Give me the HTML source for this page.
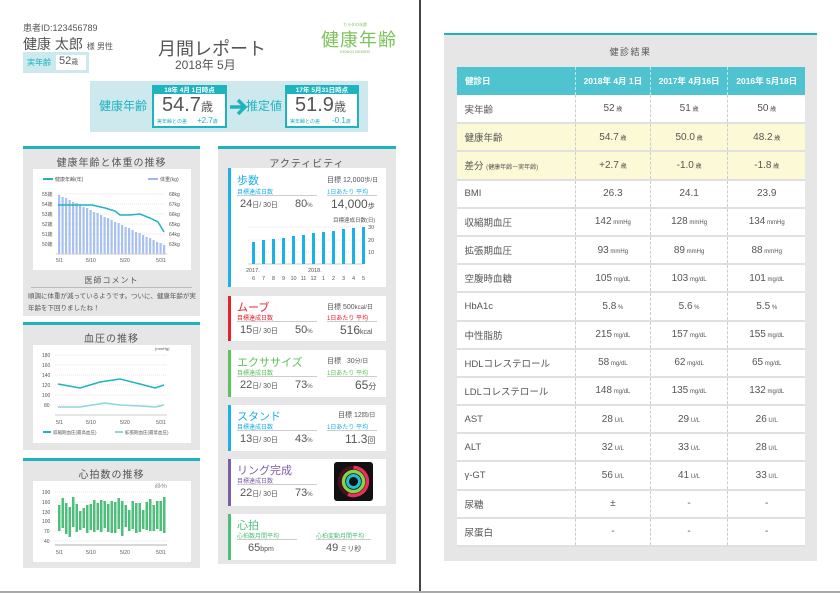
<!DOCTYPE html>
<html><head><meta charset="utf-8"><style>
*{margin:0;padding:0;box-sizing:border-box}
body{width:840px;height:593px;background:#fff;position:relative;overflow:hidden;font-family:"Liberation Sans","Noto Sans CJK JP",sans-serif;color:#555}
.a{position:absolute;white-space:nowrap}
.panel{position:absolute;background:#e6e6e6;border-top:3px solid #1fb3c0;z-index:-2}
.ttl{position:absolute;left:0;right:0;text-align:center;font-size:10px;color:#555;letter-spacing:1px}
.card{position:absolute;background:#fff;border-left:3px solid}
.sm{font-size:6px}
table{position:absolute;left:456px;top:67px;width:349px;border-collapse:collapse;font-size:10px;color:#555}
td{height:28.2px;border-bottom:2px solid #e0e0e0;border-left:1px dashed #ccc;text-align:center;background:#fff}
td:first-child{text-align:left;padding-left:8px;border-left:none;width:119px;font-size:9.5px}
tr.h td{background:#4fc3cf;color:#fff;font-weight:bold;height:28px;border-bottom:none;border-left:1px dashed #bfe9ee;font-size:8.5px}
tr.y td{background:#fcf9d6}
td small{font-size:6px}
</style></head><body>
<div class="a" style="left:419px;top:0;width:2px;height:593px;background:#444"></div>
<div class="a" style="left:0;top:591px;width:840px;height:2px;background:#aaa"></div>

<div class="a" style="left:23px;top:21px;font-size:9px;color:#555">患者ID:123456789</div>
<div class="a" style="left:23px;top:34px;font-size:14px;color:#555">健康 太郎 <span style="font-size:8px">様 男性</span></div>
<div class="a" style="left:23px;top:52px;width:66px;height:21px;background:#cce9ee"></div>
<div class="a" style="left:27px;top:57px;font-size:8px;color:#1fb3c0">実年齢</div>
<div class="a" style="left:56px;top:55px;width:30px;height:15px;background:#fff;font-size:11px;padding-left:3px">52<span style="font-size:7px">歳</span></div>
<div class="a" style="left:158px;top:35px;font-size:18px;color:#555">月間レポート</div>
<div class="a" style="left:175px;top:56px;font-size:12px;color:#555">2018年 5月</div>
<div class="a" style="left:343px;top:22px;font-size:4px;color:#7cc35a">カラダの年齢</div>
<div class="a" style="left:321px;top:26px;font-size:18px;color:#7cc35a;letter-spacing:1px">健康年齢</div>
<div class="a" style="left:340px;top:49px;font-size:4px;color:#7cc35a">KENKO NENREI</div>

<div class="a" style="left:90px;top:81px;width:278px;height:51px;background:#cde9ee"></div>
<div class="a" style="left:99px;top:97px;font-size:12px;color:#1fb3c0">健康年齢</div>
<div class="a" style="left:152px;top:85px;width:75px;height:43px;background:#fff;border:2px solid #1fb3c0;border-top:9px solid #1fb3c0"></div>
<div class="a" style="left:152px;top:84px;width:75px;text-align:center;font-size:6.5px;color:#fff;font-weight:bold">18年 4月 1日時点</div>
<div class="a" style="left:162px;top:94px;font-size:20px;color:#555">54.7<span style="font-size:12px">歳</span></div>
<div class="a" style="left:157px;top:118px;font-size:5px;color:#1fb3c0">実年齢との差</div>
<div class="a" style="left:197px;top:116px;font-size:8px;color:#1fb3c0">+2.7<span style="font-size:5px">歳</span></div>
<svg class="a" style="left:228px;top:97px" width="20" height="20"><path d="M2 10H16M10 3L17 10L10 17" stroke="#1fb3c0" stroke-width="3.5" fill="none"/></svg>
<div class="a" style="left:246px;top:97px;font-size:12px;color:#1fb3c0">推定値</div>
<div class="a" style="left:285px;top:85px;width:74px;height:43px;background:#fff;border:2px solid #1fb3c0;border-top:9px solid #1fb3c0"></div>
<div class="a" style="left:285px;top:84px;width:74px;text-align:center;font-size:6.5px;color:#fff;font-weight:bold">17年 5月31日時点</div>
<div class="a" style="left:295px;top:94px;font-size:20px;color:#555">51.9<span style="font-size:12px">歳</span></div>
<div class="a" style="left:290px;top:118px;font-size:5px;color:#1fb3c0">実年齢との差</div>
<div class="a" style="left:332px;top:116px;font-size:8px;color:#1fb3c0">-0.1<span style="font-size:5px">歳</span></div>

<div class="panel" style="left:23px;top:146px;width:177px;height:170px">
<div class="ttl" style="top:5px">健康年齢と体重の推移</div>
<div class="a" style="left:10px;top:20px;width:158px;height:101px;background:#fff"></div>
<div class="ttl" style="top:126px;font-size:8px">医師コメント</div>
<div class="a" style="left:8px;top:138px;width:161px;height:1px;background:#bbb"></div>
<div class="a" style="left:5px;top:142px;font-size:6.5px;line-height:12px;white-space:normal;width:170px">順調に体重が減っているようです。ついに、健康年齢が実年齢を下回りましたね！</div>
</div>
<svg class="a" style="left:0;top:0" width="420" height="593" font-family="Liberation Sans,Noto Sans CJK JP,sans-serif" font-size="5" fill="#555">
<line x1="43" y1="179" x2="53" y2="179" stroke="#1fb3c0" stroke-width="2"/><text x="55" y="181">健康年齢(年)</text>
<line x1="148" y1="179" x2="158" y2="179" stroke="#9fb8e8" stroke-width="2"/><text x="160" y="181">体重(kg)</text>
<g stroke="#ccc" stroke-width=".5" stroke-dasharray="1,1"><line x1="58" y1="194" x2="166" y2="194"/><line x1="58" y1="204" x2="166" y2="204"/><line x1="58" y1="214" x2="166" y2="214"/><line x1="58" y1="224" x2="166" y2="224"/><line x1="58" y1="234" x2="166" y2="234"/><line x1="58" y1="244" x2="166" y2="244"/></g>
<text x="42" y="196">55歳</text><text x="42" y="206">54歳</text><text x="42" y="216">53歳</text><text x="42" y="226">52歳</text><text x="42" y="236">51歳</text><text x="42" y="246">50歳</text>
<text x="169" y="196">68kg</text><text x="169" y="206">67kg</text><text x="169" y="216">66kg</text><text x="169" y="226">65kg</text><text x="169" y="236">64kg</text><text x="169" y="246">63kg</text>
<g fill="#a9c1ee">
<rect x="58" y="195" width="2.2" height="59"/><rect x="61.5" y="197" width="2.2" height="57"/><rect x="65" y="198" width="2.2" height="56"/><rect x="68.5" y="200" width="2.2" height="54"/><rect x="72" y="202" width="2.2" height="52"/><rect x="75.5" y="203" width="2.2" height="51"/><rect x="79" y="205" width="2.2" height="49"/><rect x="82.5" y="207" width="2.2" height="47"/><rect x="86" y="208" width="2.2" height="46"/><rect x="89.5" y="210" width="2.2" height="44"/><rect x="93" y="212" width="2.2" height="42"/><rect x="96.5" y="213" width="2.2" height="41"/><rect x="100" y="215" width="2.2" height="39"/><rect x="103.5" y="217" width="2.2" height="37"/><rect x="107" y="218" width="2.2" height="36"/><rect x="110.5" y="220" width="2.2" height="34"/><rect x="114" y="222" width="2.2" height="32"/><rect x="117.5" y="223" width="2.2" height="31"/><rect x="121" y="225" width="2.2" height="29"/><rect x="124.5" y="227" width="2.2" height="27"/><rect x="128" y="228" width="2.2" height="26"/><rect x="131.5" y="230" width="2.2" height="24"/><rect x="135" y="232" width="2.2" height="22"/><rect x="138.5" y="233" width="2.2" height="21"/><rect x="142" y="235" width="2.2" height="19"/><rect x="145.5" y="237" width="2.2" height="17"/><rect x="149" y="238" width="2.2" height="16"/><rect x="152.5" y="240" width="2.2" height="14"/><rect x="156" y="242" width="2.2" height="12"/><rect x="159.5" y="243" width="2.2" height="11"/><rect x="163" y="245" width="2.2" height="9"/>
</g>
<line x1="56" y1="254" x2="167" y2="254" stroke="#ccc"/>
<polyline points="58,205 92,205 105,208 115,211 120,215 130,215 140,214 150,218 158,222 164,232" fill="none" stroke="#1fb3c0" stroke-width="1.5"/>
<text x="56" y="262">5/1</text><text x="86" y="262">5/10</text><text x="120" y="262">5/20</text><text x="156" y="262">5/31</text>

<g stroke="#ccc" stroke-width=".5" stroke-dasharray="1,1"><line x1="55" y1="355" x2="167" y2="355"/><line x1="55" y1="365" x2="167" y2="365"/><line x1="55" y1="375" x2="167" y2="375"/><line x1="55" y1="385" x2="167" y2="385"/><line x1="55" y1="395" x2="167" y2="395"/><line x1="55" y1="405" x2="167" y2="405"/></g>
<text x="155" y="350" font-size="4">(mmHg)</text>
<text x="42" y="357">180</text><text x="42" y="367">160</text><text x="42" y="377">140</text><text x="42" y="387">120</text><text x="42" y="397">100</text><text x="44" y="407">80</text>
<line x1="55" y1="415" x2="167" y2="415" stroke="#ccc"/>
<polyline points="58,384 80,388 100,382 120,379 140,384 155,388 164,385" fill="none" stroke="#1fb3c0" stroke-width="1.5"/>
<polyline points="58,407 80,407 105,403 120,405 140,406 155,407 164,405" fill="none" stroke="#8dd6dc" stroke-width="1.5"/>
<text x="56" y="424">5/1</text><text x="86" y="424">5/10</text><text x="120" y="424">5/20</text><text x="156" y="424">5/31</text>
<line x1="43" y1="432" x2="51" y2="432" stroke="#1fb3c0" stroke-width="2"/><text x="53" y="434" font-size="4.5">収縮期血圧(最高血圧)</text>
<line x1="115" y1="432" x2="123" y2="432" stroke="#8dd6dc" stroke-width="2"/><text x="125" y="434" font-size="4.5">拡張期血圧(最低血圧)</text>

<g stroke="#ccc" stroke-width=".5" stroke-dasharray="1,1"><line x1="55" y1="492" x2="167" y2="492"/><line x1="55" y1="502" x2="167" y2="502"/><line x1="55" y1="512" x2="167" y2="512"/><line x1="55" y1="521" x2="167" y2="521"/><line x1="55" y1="531" x2="167" y2="531"/><line x1="55" y1="541" x2="167" y2="541"/></g>
<text x="155" y="487" font-size="4">(回/分)</text>
<text x="42" y="494">190</text><text x="42" y="504">160</text><text x="42" y="514">130</text><text x="42" y="523">100</text><text x="44" y="533">70</text><text x="44" y="543">40</text>
<g fill="#4cbf7a">
<rect x="58" y="505" width="2.5" height="26"/><rect x="61.5" y="498" width="2.5" height="30"/><rect x="65" y="503" width="2.5" height="31"/><rect x="68.5" y="507" width="2.5" height="30"/><rect x="72" y="497" width="2.5" height="30"/><rect x="75.5" y="504" width="2.5" height="28"/><rect x="79" y="511" width="2.5" height="19"/><rect x="82.5" y="508" width="2.5" height="20"/><rect x="86" y="505" width="2.5" height="28"/><rect x="89.5" y="504" width="2.5" height="26"/><rect x="93" y="500" width="2.5" height="32"/><rect x="96.5" y="503" width="2.5" height="27"/><rect x="100" y="500" width="2.5" height="32"/><rect x="103.5" y="501" width="2.5" height="27"/><rect x="107" y="504" width="2.5" height="28"/><rect x="110.5" y="501" width="2.5" height="32"/><rect x="114" y="502" width="2.5" height="31"/><rect x="117.5" y="498" width="2.5" height="31"/><rect x="121" y="501" width="2.5" height="35"/><rect x="124.5" y="505" width="2.5" height="22"/><rect x="128" y="510" width="2.5" height="21"/><rect x="131.5" y="501" width="2.5" height="28"/><rect x="135" y="503" width="2.5" height="30"/><rect x="138.5" y="503" width="2.5" height="29"/><rect x="142" y="510" width="2.5" height="19"/><rect x="145.5" y="502" width="2.5" height="28"/><rect x="149" y="499" width="2.5" height="32"/><rect x="152.5" y="505" width="2.5" height="26"/><rect x="156" y="501" width="2.5" height="28"/><rect x="159.5" y="501" width="2.5" height="30"/><rect x="163" y="497" width="2.5" height="36"/>
</g>
<line x1="55" y1="545" x2="167" y2="545" stroke="#ccc" stroke-width="1.5"/>
<text x="56" y="554">5/1</text><text x="86" y="554">5/10</text><text x="120" y="554">5/20</text><text x="156" y="554">5/31</text>
</svg>

<div class="panel" style="left:23px;top:322px;width:177px;height:128px">
<div class="ttl" style="top:5px">血圧の推移</div>
</div>
<div class="a" style="left:33px;top:345px;width:158px;height:98px;background:#fff;z-index:-1"></div>
<div class="panel" style="left:23px;top:458px;width:177px;height:110px">
<div class="ttl" style="top:5px">心拍数の推移</div>
</div>
<div class="a" style="left:33px;top:481px;width:158px;height:81px;background:#fff;z-index:-1"></div>

<div class="panel" style="left:218px;top:146px;width:178px;height:418px">
<div class="ttl" style="top:6px">アクティビティ</div>
</div>
<div class="card" style="left:228px;top:168px;width:158px;height:119px;border-color:#1ab0e8;z-index:-1"></div>
<div class="a" style="left:237px;top:172px;font-size:11px;color:#1ab0e8">歩数</div>
<div class="a" style="left:327px;top:175px;font-size:7px">目標 12,000<span class="sm">歩/日</span></div>
<div class="a" style="left:237px;top:187px;font-size:6px;color:#1ab0e8">目標達成日数</div>
<div class="a" style="left:327px;top:187px;font-size:6px;color:#1ab0e8">1日あたり 平均</div>
<div class="a" style="left:237px;top:195px;width:80px;height:1px;background:#ccc"></div>
<div class="a" style="left:327px;top:195px;width:50px;height:1px;background:#ccc"></div>
<div class="a" style="left:240px;top:198px;font-size:11px">24<span style="font-size:7px">日/ 30日</span></div>
<div class="a" style="left:295px;top:198px;font-size:11px">80<span class="sm">%</span></div>
<div class="a" style="left:331px;top:197px;font-size:12px">14,000<span style="font-size:7px">歩</span></div>
<svg class="a" style="left:228px;top:168px" width="158" height="119" font-family="Liberation Sans,Noto Sans CJK JP,sans-serif" font-size="5.5" fill="#555">
<text x="105" y="54">目標達成日数(日)</text>
<g stroke="#ccc" stroke-width=".5" stroke-dasharray="1,1"><line x1="20" y1="59" x2="135" y2="59"/><line x1="20" y1="72" x2="135" y2="72"/><line x1="20" y1="84" x2="135" y2="84"/></g>
<text x="140" y="61">30</text><text x="140" y="74">20</text><text x="140" y="86">10</text>
<line x1="20" y1="96" x2="135" y2="96" stroke="#ccc"/>
<g fill="#1ab0e8"><rect x="24" y="74" width="3" height="22"/><rect x="34" y="72" width="3" height="24"/><rect x="44" y="71" width="3" height="25"/><rect x="54" y="70" width="3" height="26"/><rect x="64" y="68" width="3" height="28"/><rect x="74" y="67" width="3" height="29"/><rect x="84" y="65" width="3" height="31"/><rect x="94" y="64" width="3" height="32"/><rect x="104" y="63" width="3" height="33"/><rect x="114" y="61" width="3" height="35"/><rect x="124" y="60" width="3" height="36"/><rect x="134" y="59" width="3" height="37"/></g>
<text x="18" y="104">2017.</text><text x="80" y="104">2018.</text>
<g text-anchor="middle"><text x="25.5" y="112">6</text><text x="35.5" y="112">7</text><text x="45.5" y="112">8</text><text x="55.5" y="112">9</text><text x="65.5" y="112">10</text><text x="75.5" y="112">11</text><text x="85.5" y="112">12</text><text x="95.5" y="112">1</text><text x="105.5" y="112">2</text><text x="115.5" y="112">3</text><text x="125.5" y="112">4</text><text x="135.5" y="112">5</text></g>
</svg>
<div class="card" style="left:228px;top:296px;width:158px;height:45px;border-color:#e8202a;z-index:-1"></div>
<div class="a" style="left:237px;top:299px;font-size:11px;color:#e8202a">ムーブ</div>
<div class="a" style="left:327px;top:302px;font-size:7px">目標 500<span class="sm">kcal/日</span></div>
<div class="a" style="left:237px;top:313px;font-size:6px;color:#e8202a">目標達成日数</div>
<div class="a" style="left:327px;top:313px;font-size:6px;color:#e8202a">1日あたり 平均</div>
<div class="a" style="left:237px;top:321px;width:80px;height:1px;background:#ccc"></div>
<div class="a" style="left:327px;top:321px;width:50px;height:1px;background:#ccc"></div>
<div class="a" style="left:240px;top:324px;font-size:11px">15<span style="font-size:7px">日/ 30日</span></div>
<div class="a" style="left:295px;top:324px;font-size:11px">50<span class="sm">%</span></div>
<div class="a" style="left:340px;top:323px;font-size:12px">516<span style="font-size:7px">kcal</span></div>
<div class="card" style="left:228px;top:350px;width:158px;height:47px;border-color:#5cc35a;z-index:-1"></div>
<div class="a" style="left:237px;top:354px;font-size:11px;color:#5cc35a">エクササイズ</div>
<div class="a" style="left:327px;top:356px;font-size:7px">目標 &nbsp; 30<span class="sm">分/日</span></div>
<div class="a" style="left:237px;top:368px;font-size:6px;color:#5cc35a">目標達成日数</div>
<div class="a" style="left:327px;top:368px;font-size:6px;color:#5cc35a">1日あたり 平均</div>
<div class="a" style="left:237px;top:376px;width:80px;height:1px;background:#ccc"></div>
<div class="a" style="left:327px;top:376px;width:50px;height:1px;background:#ccc"></div>
<div class="a" style="left:240px;top:379px;font-size:11px">22<span style="font-size:7px">日/ 30日</span></div>
<div class="a" style="left:295px;top:379px;font-size:11px">73<span class="sm">%</span></div>
<div class="a" style="left:355px;top:378px;font-size:12px">65<span style="font-size:8px">分</span></div>
<div class="card" style="left:228px;top:405px;width:158px;height:46px;border-color:#1ab0e8;z-index:-1"></div>
<div class="a" style="left:237px;top:408px;font-size:11px;color:#1ab0e8">スタンド</div>
<div class="a" style="left:338px;top:410px;font-size:7px">目標 12<span class="sm">回/日</span></div>
<div class="a" style="left:237px;top:422px;font-size:6px;color:#1ab0e8">目標達成日数</div>
<div class="a" style="left:327px;top:422px;font-size:6px;color:#1ab0e8">1日あたり 平均</div>
<div class="a" style="left:237px;top:430px;width:80px;height:1px;background:#ccc"></div>
<div class="a" style="left:327px;top:430px;width:50px;height:1px;background:#ccc"></div>
<div class="a" style="left:240px;top:433px;font-size:11px">13<span style="font-size:7px">日/ 30日</span></div>
<div class="a" style="left:295px;top:433px;font-size:11px">43<span class="sm">%</span></div>
<div class="a" style="left:345px;top:432px;font-size:12px">11.3<span style="font-size:8px">回</span></div>
<div class="card" style="left:228px;top:459px;width:158px;height:47px;border-color:#7b5ea7;z-index:-1"></div>
<div class="a" style="left:237px;top:462px;font-size:11px;color:#7b5ea7">リング完成</div>
<div class="a" style="left:237px;top:476px;font-size:6px;color:#7b5ea7">目標達成日数</div>
<div class="a" style="left:237px;top:484px;width:80px;height:1px;background:#ccc"></div>
<div class="a" style="left:240px;top:487px;font-size:11px">22<span style="font-size:7px">日/ 30日</span></div>
<div class="a" style="left:295px;top:487px;font-size:11px">73<span class="sm">%</span></div>
<svg class="a" style="left:334px;top:462px" width="39" height="39"><rect width="39" height="39" rx="3" fill="#111"/>
<circle cx="19.5" cy="19.5" r="14" fill="none" stroke="#4a1020" stroke-width="3.5"/><path d="M19.5 5.5A14 14 0 1 1 14 32.4" fill="none" stroke="#e8305a" stroke-width="3.5"/>
<circle cx="19.5" cy="19.5" r="10" fill="none" stroke="#8ad24a" stroke-width="3.5"/>
<circle cx="19.5" cy="19.5" r="6" fill="none" stroke="#1fc0d8" stroke-width="3"/></svg>
<div class="card" style="left:228px;top:514px;width:158px;height:46px;border-color:#4cbf7a;z-index:-1"></div>
<div class="a" style="left:237px;top:517px;font-size:11px;color:#4cbf7a">心拍</div>
<div class="a" style="left:237px;top:531px;font-size:6px;color:#4cbf7a">心拍数月間平均</div>
<div class="a" style="left:316px;top:531px;font-size:6px;color:#4cbf7a">心拍変動月間平均</div>
<div class="a" style="left:237px;top:539px;width:60px;height:1px;background:#ccc"></div>
<div class="a" style="left:316px;top:539px;width:55px;height:1px;background:#ccc"></div>
<div class="a" style="left:248px;top:542px;font-size:11px">65<span style="font-size:7px">bpm</span></div>
<div class="a" style="left:326px;top:542px;font-size:11px">49<span style="font-size:7px"> ミリ秒</span></div>

<div class="a" style="left:444px;top:33px;width:373px;height:528px;background:#e6e6e6;border-top:2px solid #1fb3c0;z-index:-3"></div>
<div class="a" style="left:444px;top:45px;width:373px;text-align:center;font-size:9px;letter-spacing:1.5px">健診結果</div>
<table>
<tr class="h"><td>健診日</td><td>2018年 4月 1日</td><td>2017年 4月16日</td><td>2016年 5月18日</td></tr>
<tr><td>実年齢</td><td>52<small> 歳</small></td><td>51<small> 歳</small></td><td>50<small> 歳</small></td></tr>
<tr class="y"><td>健康年齢</td><td>54.7<small> 歳</small></td><td>50.0<small> 歳</small></td><td>48.2<small> 歳</small></td></tr>
<tr class="y"><td>差分 <small>(健康年齢ー実年齢)</small></td><td>+2.7<small> 歳</small></td><td>-1.0<small> 歳</small></td><td>-1.8<small> 歳</small></td></tr>
<tr><td>BMI</td><td>26.3</td><td>24.1</td><td>23.9</td></tr>
<tr><td>収縮期血圧</td><td>142<small> mmHg</small></td><td>128<small> mmHg</small></td><td>134<small> mmHg</small></td></tr>
<tr><td>拡張期血圧</td><td>93<small> mmHg</small></td><td>89<small> mmHg</small></td><td>88<small> mmHg</small></td></tr>
<tr><td>空腹時血糖</td><td>105<small> mg/dL</small></td><td>103<small> mg/dL</small></td><td>101<small> mg/dL</small></td></tr>
<tr><td>HbA1c</td><td>5.8<small> %</small></td><td>5.6<small> %</small></td><td>5.5<small> %</small></td></tr>
<tr><td>中性脂肪</td><td>215<small> mg/dL</small></td><td>157<small> mg/dL</small></td><td>155<small> mg/dL</small></td></tr>
<tr><td>HDLコレステロール</td><td>58<small> mg/dL</small></td><td>62<small> mg/dL</small></td><td>65<small> mg/dL</small></td></tr>
<tr><td>LDLコレステロール</td><td>148<small> mg/dL</small></td><td>135<small> mg/dL</small></td><td>132<small> mg/dL</small></td></tr>
<tr><td>AST</td><td>28<small> U/L</small></td><td>29<small> U/L</small></td><td>26<small> U/L</small></td></tr>
<tr><td>ALT</td><td>32<small> U/L</small></td><td>33<small> U/L</small></td><td>28<small> U/L</small></td></tr>
<tr><td>γ-GT</td><td>56<small> U/L</small></td><td>41<small> U/L</small></td><td>33<small> U/L</small></td></tr>
<tr><td>尿糖</td><td>±</td><td>-</td><td>-</td></tr>
<tr><td>尿蛋白</td><td>-</td><td>-</td><td>-</td></tr>
</table>
</body></html>
